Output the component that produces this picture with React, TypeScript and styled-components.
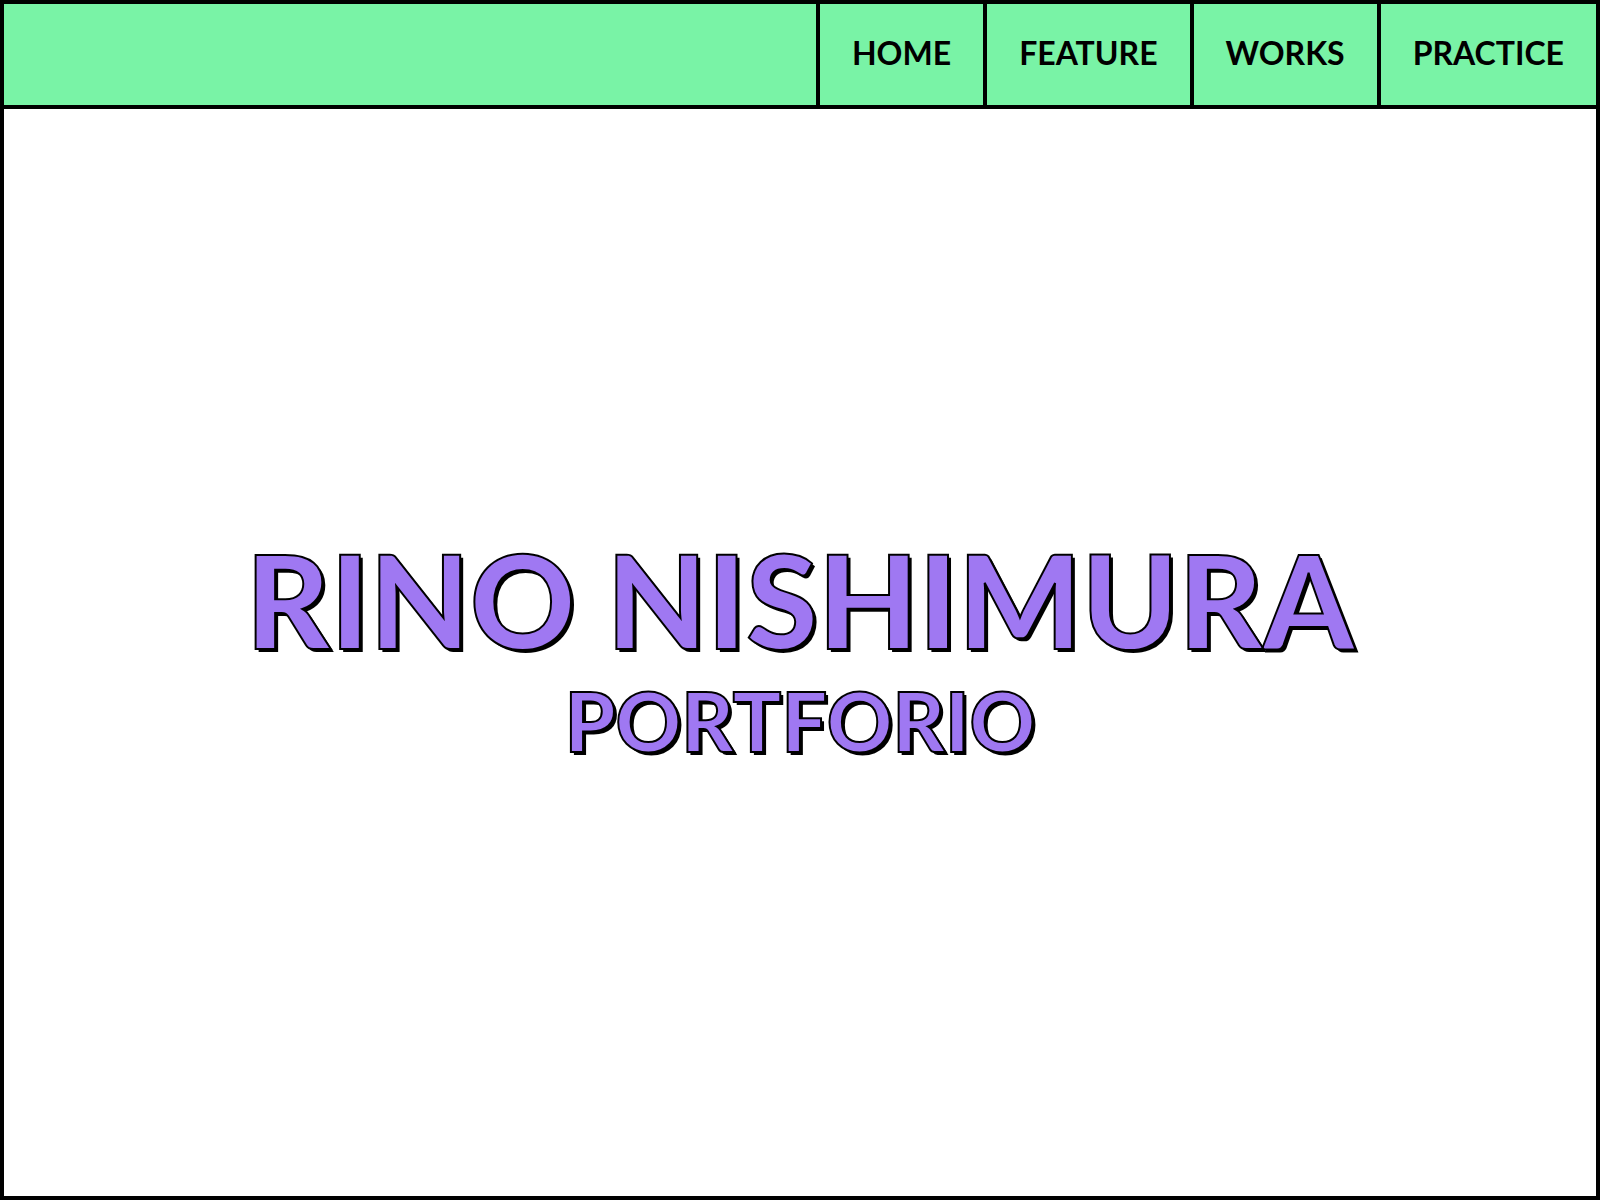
import React from "react";
import styled, { createGlobalStyle } from "styled-components";

const GlobalStyle = createGlobalStyle`
  *, *::before, *::after { box-sizing: border-box; }
  body { margin: 0; background: #fff; color: #000; font-family: Lato, "Open Sans", sans-serif; }
`;

const Page = styled.div`
  display: flex;
  flex-direction: column;
  min-height: 100vh;
  border: 4px solid #000;
`;

const Header = styled.header`
  background: #79f3a6;
  border-bottom: 4px solid #000;
`;

const Menu = styled.ul`
  display: flex;
  justify-content: flex-end;
  margin: 0;
  padding: 0;
  list-style: none;
`;

const MenuLink = styled.a`
  display: block;
  padding: 24px 32px 28px;
  border-left: 4px solid #000;
  color: #000;
  font-size: 32px;
  font-weight: 700;
  line-height: 49px;
  text-decoration: none;
`;

const Hero = styled.main`
  flex: 1;
  display: flex;
  flex-direction: column;
  align-items: center;
  justify-content: center;
  padding-bottom: 20px;
  color: #9f78f2;
  font-family: "Lato Black", Lato, sans-serif;
  font-weight: 900;
  text-align: center;
  text-shadow: 3px 3px 0 #000;
  -webkit-text-stroke: 2px #000;
`;

const Name = styled.h1`
  margin: 0;
  font-size: 130px;
  font-weight: 900;
  line-height: 156px;
`;

const Subtitle = styled.p`
  margin: 0;
  font-size: 81px;
  line-height: 88px;
`;

const sections = ["HOME", "FEATURE", "WORKS", "PRACTICE"];

export default function App() {
  return (
    <Page>
      <GlobalStyle />
      <Header>
        <nav>
          <Menu>
            {sections.map((section) => (
              <li key={section}>
                <MenuLink href={`#${section.toLowerCase()}`}>{section}</MenuLink>
              </li>
            ))}
          </Menu>
        </nav>
      </Header>
      <Hero>
        <Name>RINO NISHIMURA</Name>
        <Subtitle>PORTFORIO</Subtitle>
      </Hero>
    </Page>
  );
}
